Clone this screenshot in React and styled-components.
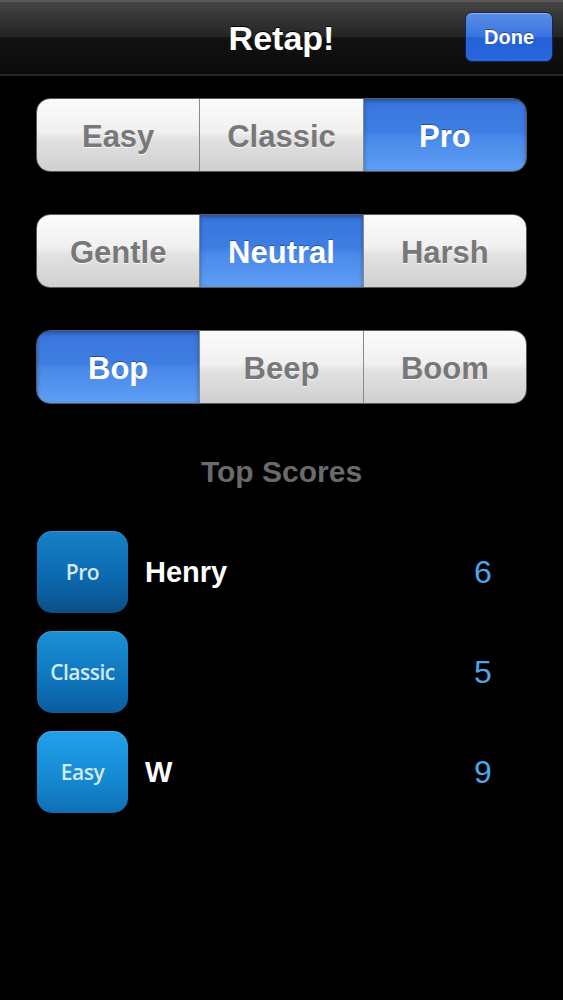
import React, { useState } from "react";
import styled, { createGlobalStyle } from "styled-components";

const Global = createGlobalStyle`
  html, body { margin: 0; padding: 0; background: #000; }
  body { font-family: "Liberation Sans", Arial, sans-serif; }
`;

const Screen = styled.div`
  width: 563px;
  min-height: 1000px;
  background: #000;
  display: flex;
  flex-direction: column;
`;

const NavBar = styled.header`
  box-sizing: border-box;
  height: 76px;
  border-top: 2px solid #5a5a5a;
  border-bottom: 2px solid #262626;
  background: linear-gradient(
    to bottom,
    #454545 0%,
    #242424 48%,
    #121212 50%,
    #0b0b0b 100%
  );
  display: grid;
  grid-template-columns: 1fr auto 1fr;
  align-items: center;
`;

const Title = styled.h1`
  grid-column: 2;
  margin: 0;
  color: #fff;
  font-size: 34px;
  font-weight: bold;
  text-shadow: 0 -1px 0 #000;
`;

const DoneButton = styled.button`
  grid-column: 3;
  justify-self: end;
  margin: -2px 10px 0 0;
  width: 88px;
  height: 50px;
  border-radius: 7px;
  border: 1px solid #0c2552;
  background: linear-gradient(to bottom, #5a8de6 0%, #3a74e0 48%, #2461d8 52%, #2a66dc 100%);
  box-shadow: inset 0 1px 0 rgba(255, 255, 255, 0.35);
  color: #fff;
  font-family: "Liberation Sans", Arial, sans-serif;
  font-weight: bold;
  font-size: 20px;
  text-shadow: 0 -1px 0 rgba(0, 0, 0, 0.4);
`;

const Controls = styled.div`
  display: flex;
  flex-direction: column;
  gap: 42px;
  padding: 22px 36px 0 36px;
`;

const Segmented = styled.div`
  display: flex;
  height: 74px;
  border-radius: 14px;
  overflow: hidden;
  border: 1px solid #5a5a5a;
  box-sizing: border-box;
`;

const Segment = styled.button`
  flex: 1;
  border: none;
  border-left: ${({ $first }) => ($first ? "none" : "1px solid #8a8a8a")};
  padding: 3px 0 0;
  font-family: "Liberation Sans", Arial, sans-serif;
  font-weight: bold;
  font-size: 31px;
  color: ${({ $active }) => ($active ? "#fff" : "#787878")};
  text-shadow: ${({ $active }) =>
    $active ? "0 -1px 0 rgba(0,0,0,0.35)" : "0 1px 0 rgba(255,255,255,0.8)"};
  background: ${({ $active }) =>
    $active
      ? "linear-gradient(to bottom, #3874dc 0%, #3e7ee2 45%, #4a8aea 55%, #5e9ef3 100%)"
      : "linear-gradient(to bottom, #fbfbfb 0%, #f0f0f0 45%, #e2e2e2 55%, #cfcfcf 100%)"};
  box-shadow: ${({ $active }) =>
    $active ? "inset 0 2px 4px rgba(0,0,40,0.35)" : "none"};
`;

const SectionTitle = styled.h2`
  margin: 52px 0 0;
  text-align: center;
  color: #6a6a6a;
  font-size: 30px;
  font-weight: bold;
  line-height: 32px;
`;

const ScoreList = styled.div`
  display: flex;
  flex-direction: column;
  gap: 18px;
  padding: 43px 0 0 37px;
`;

const ScoreRow = styled.div`
  display: flex;
  align-items: center;
  height: 82px;
`;

const ModeBadge = styled.div`
  width: 91px;
  height: 82px;
  border-radius: 15px;
  flex-shrink: 0;
  display: flex;
  align-items: center;
  justify-content: center;
  font-family: "Open Sans", "Noto Sans", sans-serif;
  font-weight: 600;
  font-size: 21px;
  color: #d3e9f8;
  letter-spacing: -0.5px;
  background: ${({ $tone }) => $tone};
  box-shadow: inset 0 1px 0 rgba(255, 255, 255, 0.15);
`;

const PlayerName = styled.span`
  flex: 1;
  margin-left: 17px;
  color: #fff;
  font-weight: bold;
  font-size: 29px;
`;

const Points = styled.span`
  width: 92px;
  margin-right: 34px;
  text-align: center;
  color: #4da6ea;
  font-size: 32px;
`;

const tones = {
  Pro: "linear-gradient(to bottom, #1680c8 0%, #0c6ab0 55%, #0a4f88 100%)",
  Classic: "linear-gradient(to bottom, #1b8fd6 0%, #0f78c0 55%, #0b5c9c 100%)",
  Easy: "linear-gradient(to bottom, #23a0ea 0%, #158bd4 55%, #0f6fb4 100%)",
};

const groups = [
  { options: ["Easy", "Classic", "Pro"], initial: 2 },
  { options: ["Gentle", "Neutral", "Harsh"], initial: 1 },
  { options: ["Bop", "Beep", "Boom"], initial: 0 },
];

const scores = [
  { mode: "Pro", name: "Henry", points: 6 },
  { mode: "Classic", name: "", points: 5 },
  { mode: "Easy", name: "W", points: 9 },
];

function SegmentGroup({ options, initial }) {
  const [selected, setSelected] = useState(initial);
  return (
    <Segmented>
      {options.map((label, i) => (
        <Segment
          key={label}
          $first={i === 0}
          $active={i === selected}
          onClick={() => setSelected(i)}
        >
          {label}
        </Segment>
      ))}
    </Segmented>
  );
}

export default function App() {
  return (
    <Screen>
      <Global />
      <NavBar>
        <Title>Retap!</Title>
        <DoneButton>Done</DoneButton>
      </NavBar>
      <Controls>
        {groups.map((g, i) => (
          <SegmentGroup key={i} options={g.options} initial={g.initial} />
        ))}
      </Controls>
      <SectionTitle>Top Scores</SectionTitle>
      <ScoreList>
        {scores.map((s) => (
          <ScoreRow key={s.mode}>
            <ModeBadge $tone={tones[s.mode]}>{s.mode}</ModeBadge>
            <PlayerName>{s.name}</PlayerName>
            <Points>{s.points}</Points>
          </ScoreRow>
        ))}
      </ScoreList>
    </Screen>
  );
}
